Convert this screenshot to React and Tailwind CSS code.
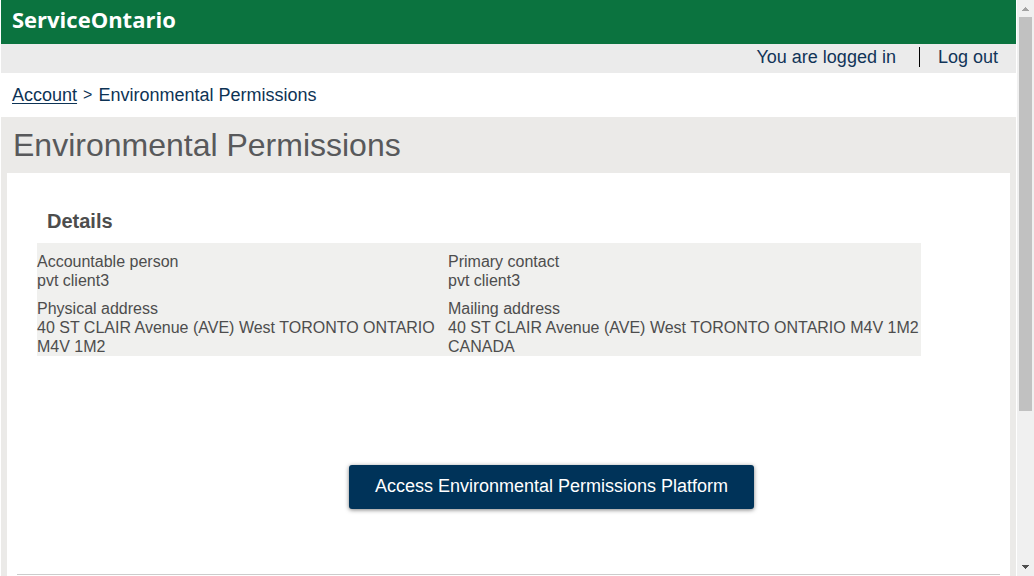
const details = [
  { label: 'Accountable person', value: 'pvt client3' },
  { label: 'Primary contact', value: 'pvt client3' },
  {
    label: 'Physical address',
    value: '40 ST CLAIR Avenue (AVE) West TORONTO ONTARIO M4V 1M2',
  },
  {
    label: 'Mailing address',
    value: '40 ST CLAIR Avenue (AVE) West TORONTO ONTARIO M4V 1M2 CANADA',
  },
];

function Header() {
  return (
    <header>
      <div className="flex h-11 items-start bg-[#0b733f] px-[11px] pt-1">
        <span className="font-['Open_Sans',sans-serif] text-[22px] leading-[30px] font-bold text-white">
          ServiceOntario
        </span>
      </div>
      <div className="flex h-[29px] items-start justify-end bg-[#ebebeb] pt-[3px] pr-[18px] text-[18px] leading-5 text-[#113458]">
        <span className="border-r border-black pr-[23px]">You are logged in</span>
        <a href="#logout" className="pl-[18px]">
          Log out
        </a>
      </div>
    </header>
  );
}

function Breadcrumb() {
  return (
    <nav
      aria-label="Breadcrumb"
      className="flex h-11 items-center gap-[6px] px-[11px] text-[18px] leading-5 text-[#0d3355]"
    >
      <a href="#account" className="underline underline-offset-2">
        Account
      </a>
      <span className="text-base">&gt;</span>
      <span>Environmental Permissions</span>
    </nav>
  );
}

function Details() {
  return (
    <section className="px-[30px] pt-9">
      <h2 className="px-[10px] text-[20px] leading-6 font-bold text-[#4d4d4d]">Details</h2>
      <dl className="mt-[10px] mr-[59px] grid grid-cols-[411fr_473fr] gap-y-[9px] bg-[#f0f0ee] pt-[9px] text-base leading-[19px] text-[#4d4d4d]">
        {details.map((item) => (
          <div key={item.label} className="pr-[2px]">
            <dt>{item.label}</dt>
            <dd>{item.value}</dd>
          </div>
        ))}
      </dl>
    </section>
  );
}

function ScrollRail() {
  return (
    <div aria-hidden="true" className="flex w-[17px] shrink-0 flex-col items-center bg-[#f0f0f0]">
      <svg className="h-[17px] w-[17px] shrink-0" viewBox="0 0 17 17" shapeRendering="crispEdges">
        <path d="M8 7h1v1h1v1h1v1h1v1H5v-1h1V9h1V8h1z" fill="#a3a3a3" />
      </svg>
      <div className="flex w-full grow flex-col px-[2px]">
        <div className="h-8/11 bg-[#c1c1c1]" />
      </div>
      <svg className="h-[17px] w-[17px] shrink-0" viewBox="0 0 17 17" shapeRendering="crispEdges">
        <path d="M5 6h7v1h-1v1h-1v1H9v1H8V9H7V8H6V7H5z" fill="#505050" />
      </svg>
    </div>
  );
}

export default function App() {
  return (
    <div className="flex h-screen gap-px overflow-hidden bg-white pl-px font-['Liberation_Sans',Arial,sans-serif]">
      <div className="flex min-w-0 grow flex-col">
        <Header />
        <Breadcrumb />
        <main className="flex grow flex-col bg-[#ebeae8] px-[6px]">
          <h1 className="h-14 px-[6px] text-[32px] leading-[56px] text-[#58595b]">
            Environmental Permissions
          </h1>
          <div className="grow bg-white">
            <Details />
            <div className="mt-[109px] flex justify-center pl-[86px]">
              <button
                type="button"
                className="h-11 rounded-[3px] bg-[#003359] px-[26px] pb-[2px] text-[18px] leading-6 text-white shadow-[0_1px_4px_rgba(0,0,0,0.5)]"
              >
                Access Environmental Permissions Platform
              </button>
            </div>
            <hr className="mx-[10px] mt-[65px] border-[#cccccc]" />
          </div>
        </main>
      </div>
      <ScrollRail />
    </div>
  );
}
